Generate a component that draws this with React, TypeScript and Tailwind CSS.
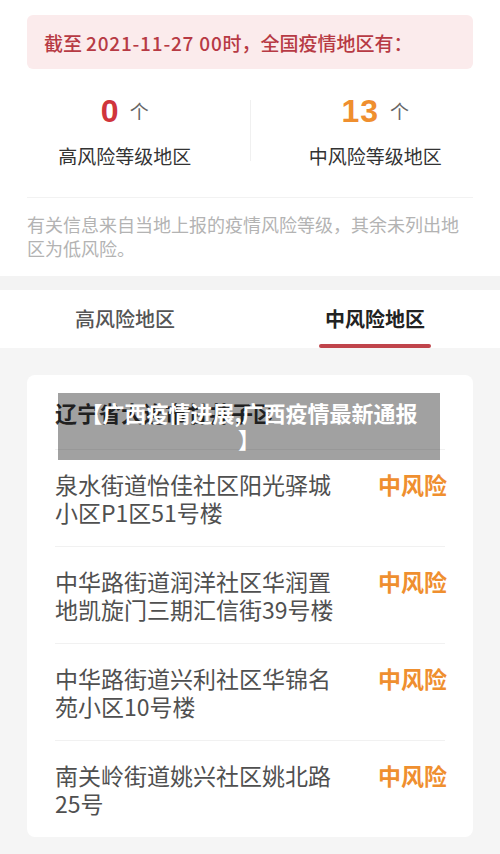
import React from "react";

const rows = [
  ["泉水街道怡佳社区阳光驿城", "小区P1区51号楼"],
  ["中华路街道润洋社区华润置", "地凯旋门三期汇信街39号楼"],
  ["中华路街道兴利社区华锦名", "苑小区10号楼"],
  ["南关岭街道姚兴社区姚北路", "25号"],
];

export default function App() {
  return (
    <div
      className="relative w-[500px] h-[854px] overflow-hidden bg-[#f5f5f5]"
      style={{ fontFamily: '"Noto Sans CJK SC", "Noto Sans", sans-serif' }}
    >
      {/* top summary */}
      <div className="bg-white px-[27px] pt-[15px] pb-[16px]">
        <div className="h-[54px] rounded-md bg-[#fbebec] flex items-center pl-[17px] text-[19px] font-medium text-[#b73a44] leading-none">
          截至 <span className="tracking-[0.8px] ml-[4px]">2021-11-27 00</span>时，全国疫情地区有：
        </div>
        <div className="flex -mx-[27px] mt-[22px]">
          <div className="flex-1 flex flex-col items-center">
            <div className="h-[40px] flex items-center gap-[11px]">
              <span className="text-[32px] font-semibold text-[#d0353c] leading-none" style={{ fontFamily: '"Liberation Sans", Arial, sans-serif' }}>0</span>
              <span className="text-[19px] text-[#666]">个</span>
            </div>
            <div className="mt-[11px] h-[28px] flex items-center text-[19px] text-[#333]">高风险等级地区</div>
          </div>
          <div className="w-px bg-[#f0f0f0] my-[9px]" />
          <div className="flex-1 flex flex-col items-center">
            <div className="h-[40px] flex items-center gap-[11px]">
              <span className="text-[32px] font-semibold text-[#ef8f2f] leading-none tracking-[1px]" style={{ fontFamily: '"Liberation Sans", Arial, sans-serif' }}>13</span>
              <span className="text-[19px] text-[#666]">个</span>
            </div>
            <div className="mt-[11px] h-[28px] flex items-center text-[19px] text-[#333]">中风险等级地区</div>
          </div>
        </div>
        <div className="mt-[27px] h-px bg-[#f2f2f2]" />
        <div className="mt-[14px] text-[18px] leading-[24px] text-[#b3b3b3]">
          有关信息来自当地上报的疫情风险等级，其余未列出地区为低风险。
        </div>
      </div>

      {/* gap band */}
      <div className="h-[14px] bg-[#f3f3f3]" />

      {/* tabs */}
      <div className="h-[58px] bg-white flex">
        <div className="flex-1 flex items-center justify-center text-[20px] font-medium text-[#555]">高风险地区</div>
        <div className="flex-1 relative flex items-center justify-center text-[20px] font-bold text-[#222]">
          中风险地区
          <div className="absolute bottom-0 left-1/2 -translate-x-1/2 w-[112px] h-[4px] bg-[#c0444b] rounded-sm" />
        </div>
      </div>

      {/* card */}
      <div className="mx-[27px] mt-[27px] bg-white rounded-lg px-[28px]">
        <div className="h-[74px] flex items-center text-[22px] font-bold text-[#333]">辽宁省大连市甘井子区</div>
        {rows.map((r, i) => (
          <div key={i} className="border-t border-[#f1f1f1] py-[20px] flex justify-between">
            <div className="w-[285px] text-[23px] leading-[28px] text-[#505050]">
              <div>{r[0]}</div>
              <div>{r[1]}</div>
            </div>
            <div className="text-[23px] leading-[28px] font-semibold text-[#ef8f2f] -mr-[2px]">中风险</div>
          </div>
        ))}
      </div>

      {/* overlay caption */}
      <div className="absolute left-[58px] top-[393px] w-[382px] h-[67px] bg-[rgba(0,0,0,0.37)] pt-[6px] text-center text-white font-bold text-[22px] leading-[26px]">
        【广西疫情进展,广西疫情最新通报
        <br />】
      </div>
    </div>
  );
}
